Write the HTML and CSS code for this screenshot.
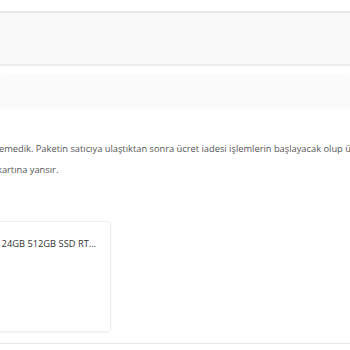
FILE: index.html
```html
<!DOCTYPE html>
<html lang="tr">
<head>
    <meta charset="UTF-8">
    <meta name="viewport" content="width=device-width, initial-scale=1.0">
    <title>İade Detayı</title>
    <link rel="stylesheet" href="styles.css">
</head>
<body>
  <div class="page">
    <div class="tabs"></div>
    <div class="status"></div>
    <div class="info">
      <p>inceleyemedik. Paketin satıcıya ulaştıktan sonra ücret iadesi işlemlerin başlayacak olup ücret iaden 2-10 iş günü içinde</p>
      <p>kartına yansır.</p>
    </div>
    <div class="products">
      <div class="card">
        <p class="name">Apple MacBook Pro M3 Max 16 24GB 512GB SSD RT…</p>
      </div>
    </div>
    <div class="footer"></div>
  </div>
</body>
</html>
```

FILE: styles.css
```css
body {
  margin: 0;
  background: #fff;
  font-family: "Open Sans", "Noto Sans", sans-serif;
  overflow: hidden;
}
.page {
  padding-top: 11px;
}
.tabs {
  height: 51px;
  background: #f9f9f9;
  border-top: 2px solid #e8e8e8;
  border-bottom: 2px solid #ececec;
}
.status {
  margin-top: 10px;
  height: 31px;
  background: #fafafa;
  box-shadow: 0 0 6px 2px #fafafa;
}
.info {
  margin-top: 31px;
  margin-left: -3px;
}
.info p {
  margin: 0;
  font-size: 9.3px;
  line-height: 21px;
  color: #555;
  white-space: nowrap;
}
.info p:first-child {
  text-indent: -28px;
}
.products {
  margin-top: 41px;
  width: 111px;
  display: flex;
  justify-content: flex-end;
}
.card {
  flex-shrink: 0;
  width: 180px;
  height: 111px;
  border: 1px solid #eee;
  border-radius: 4px;
  box-shadow: 0 1px 3px rgba(0, 0, 0, 0.05);
  padding: 15px 14px;
  box-sizing: border-box;
  overflow: hidden;
  display: flex;
  justify-content: flex-end;
}
.name {
  margin: 0;
  font-size: 9.3px;
  line-height: 13px;
  color: #333;
  white-space: nowrap;
}
.footer {
  margin-top: 11px;
  border-top: 1px solid #e6e6e6;
}
```
